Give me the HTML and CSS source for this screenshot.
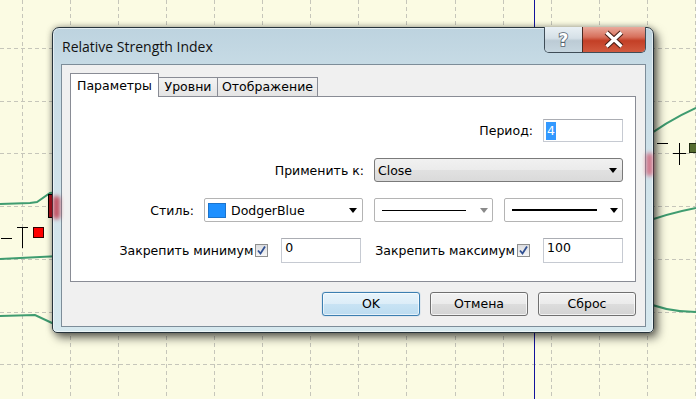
FILE: index.html
```html
<!DOCTYPE html>
<html lang="ru">
<head>
<meta charset="utf-8">
<title>Relative Strength Index</title>
<link rel="stylesheet" href="styles.css">
</head>
<body>
<svg class="chart" width="696" height="399" viewBox="0 0 696 399">
  <g class="grid">
    <path d="M22.5 0V399M70.5 0V399M118.5 0V399M166.5 0V399M214.5 0V399M262.5 0V399M310.5 0V399M358.5 0V399M406.5 0V399M455.5 0V399M503.5 0V399M551.5 0V399M599.5 0V399M647.5 0V399M695.5 0V399"/>
    <path d="M0 48.5H696M0 101.5H696M0 153.5H696M0 206.5H696M0 259.5H696M0 312.5H696M0 364.5H696"/>
  </g>
  <path class="vline" d="M534.5 0V399"/>
  <g class="curves">
    <path d="M0 204L30 203L37 202L50 193L60 192"/>
    <path d="M0 259L60 256"/>
    <path d="M0 316L35 315L52 323L60 326"/>
    <path d="M640 142Q665 122 696 108"/>
    <path d="M640 224Q665 214 696 208"/>
    <path d="M640 300Q665 312 696 312"/>
  </g>
  <g class="marks">
    <path d="M1 238.5H12M17 227.5H28M22.5 227V248M657 143.5H668M679.5 143V165M673 153.5H686"/>
  </g>
  <rect class="redbar" x="48.5" y="194.5" width="6" height="23"/>
  <rect class="redsq" x="33.5" y="227.5" width="10" height="10"/>
  <rect class="olivesq" x="689.5" y="143.5" width="9" height="9"/>
</svg>

<div class="dlg">
  <div class="spot spot-l"></div>
  <div class="spot spot-r"></div>
  <div class="titlebar">
    <span class="title">Relative Strength Index</span>
    <div class="caps">
      <div class="help">
        <svg width="37" height="25" viewBox="0 0 37 25"><text x="18.5" y="19" text-anchor="middle">?</text></svg>
      </div>
      <div class="close">
        <svg width="62" height="25" viewBox="0 0 62 25">
          <path class="xo" d="M23.5 5.5L38.5 19.5M38.5 5.5L23.5 19.5"/>
          <path class="xi" d="M23.5 5.5L38.5 19.5M38.5 5.5L23.5 19.5"/>
        </svg>
      </div>
    </div>
  </div>
  <div class="client">
    <div class="tabs">
      <div class="tab active t1">Параметры</div>
      <div class="tab t2">Уровни</div>
      <div class="tab t3">Отображение</div>
    </div>
    <div class="panel">
      <div class="row">
        <span class="lbl">Период:</span>
        <div class="input period"><span class="sel">4</span></div>
      </div>
      <div class="row">
        <span class="lbl">Применить к:</span>
        <div class="combo grey apply"><span class="ctext">Close</span><span class="arrow"></span></div>
      </div>
      <div class="row">
        <span class="lbl">Стиль:</span>
        <div class="combo white color"><span class="swatch"></span><span class="ctext">DodgerBlue</span><span class="arrow"></span></div>
        <div class="combo white small"><span class="line thin"></span><span class="arrow dim"></span></div>
        <div class="combo white small"><span class="line thick"></span><span class="arrow"></span></div>
      </div>
      <div class="row">
        <span class="lbl2">Закрепить минимум</span>
        <span class="cb"><svg width="11" height="11" viewBox="0 0 11 11"><path d="M2 5.5L4.5 8.5L9 1.5"/></svg></span>
        <div class="input lim">0</div>
        <span class="lbl2 gap">Закрепить максимум</span>
        <span class="cb"><svg width="11" height="11" viewBox="0 0 11 11"><path d="M2 5.5L4.5 8.5L9 1.5"/></svg></span>
        <div class="input lim">100</div>
      </div>
    </div>
    <div class="buttons">
      <div class="btn ok">OK</div>
      <div class="btn">Отмена</div>
      <div class="btn">Сброс</div>
    </div>
  </div>
</div>
</body>
</html>
```

FILE: styles.css
```css
* { box-sizing: border-box; margin: 0; padding: 0; }
html, body { width: 696px; height: 399px; overflow: hidden; }
body {
  position: relative;
  background: #fbfbe3;
  font-family: "DejaVu Sans", Verdana, sans-serif;
  font-size: 12.5px;
  color: #000;
}

/* chart canvas */
.chart { position: absolute; left: 0; top: 0; display: block; }
.grid path { stroke: #c6c6ba; stroke-width: 1; stroke-dasharray: 4 3; fill: none; }
.vline { stroke: #12129c; stroke-width: 1; }
.curves path { fill: none; stroke: #3f9c70; stroke-width: 2; }
.marks path { stroke: #000; stroke-width: 1; fill: none; }
.redbar { fill: #b3121e; stroke: #000; }
.redsq { fill: #ff0000; stroke: #300; }
.olivesq { fill: #556b2f; stroke: #1f2a10; }

/* dialog window */
.dlg {
  position: absolute;
  left: 52px;
  top: 27px;
  width: 602px;
  height: 306px;
  display: flex;
  flex-direction: column;
  padding: 0 7px 5px 8px;
  border: 1px solid #26333b;
  border-radius: 7px 7px 5px 5px;
  background: linear-gradient(180deg, #bdd3df 0, #c8dce6 14%, #d2e4eb 60%, #d6e8ee 100%);
  box-shadow: inset 0 0 0 1px rgba(255,255,255,.55), 4px 5px 10px rgba(0,0,0,.55), 0 0 6px rgba(0,0,0,.35);
}
.spot { position: absolute; filter: blur(2px); border-radius: 3px; }
.spot-l { left: 0; top: 168px; width: 7px; height: 23px; background: rgba(190, 30, 50, .75); }
.spot-r { left: 593px; top: 125px; width: 7px; height: 23px; background: rgba(210, 70, 95, .7); }

.titlebar { height: 36px; display: flex; align-items: flex-start; }
.title {
  font-family: "Open Sans", "Noto Sans", sans-serif;
  font-size: 14px;
  line-height: 20px;
  padding: 9px 0 0 1px;
  color: #111;
}
.caps {
  margin-left: auto;
  margin-top: -1px;
  display: flex;
  height: 26px;
  border: 1px solid #3f4d57;
  border-top: none;
  border-radius: 0 0 5px 5px;
  overflow: hidden;
}
.help {
  width: 37px;
  background: linear-gradient(180deg, #e9f0f4 0, #d5e0e7 45%, #bccbd5 55%, #c6d6df 100%);
}
.help svg, .close svg { display: block; }
.help text {
  font-family: "DejaVu Sans", sans-serif;
  font-weight: bold;
  font-size: 17px;
  fill: #fff;
  stroke: #55636e;
  stroke-width: 1.6px;
  paint-order: stroke fill;
}
.close {
  width: 63px;
  border-left: 1px solid #4b2a22;
  background: linear-gradient(180deg, #e9aa9c 0, #d7705c 40%, #c33f26 55%, #d15a3f 100%);
}
.xo { stroke: #4a2018; stroke-width: 5.4; fill: none; }
.xi { stroke: #fff; stroke-width: 3.2; fill: none; }

/* client area */
.client {
  flex: 1;
  background: #f0f0f0;
  border: 1px solid #7d8d99;
  padding: 8px 9px 10px 8px;
  display: flex;
  flex-direction: column;
}
.tabs { height: 23px; display: flex; align-items: flex-end; position: relative; z-index: 1; }
.tab {
  height: 19px;
  border: 1px solid #898c95;
  border-bottom: none;
  background: linear-gradient(180deg, #f3f3f3, #e4e4e4);
  line-height: 18px;
  text-align: center;
  margin-left: -1px;
}
.tab.active {
  height: 24px;
  margin-bottom: -1px;
  background: #fff;
  padding-top: 3px;
  position: relative;
  z-index: 2;
}
.t1 { width: 89px; margin-left: 0; }
.t2 { width: 60px; }
.t3 { width: 101px; }

.panel {
  height: 186px;
  border: 1px solid #898c95;
  background: #fff;
  padding: 21px 12px 0 0;
  display: flex;
  flex-direction: column;
  gap: 16px;
}
.row { display: flex; justify-content: flex-end; align-items: center; height: 24px; }
.lbl { margin-right: 10px; }

.input {
  height: 24px;
  border: 1px solid #c6cad2;
  border-top-color: #abadb3;
  background: #fff;
}
.period { width: 80px; height: 23px; padding: 1px 2px; line-height: 19px; }
.sel { display: inline-block; background: #3399ff; color: #fff; padding: 0 1px; line-height: 18px; }
.lim { width: 80px; height: 25px; padding: 1px 3px; line-height: 16px; }

.combo { height: 24px; display: flex; align-items: center; position: relative; }
.grey {
  border: 1px solid #7a7a7a;
  border-radius: 3px;
  background: linear-gradient(180deg, #f1f1f1 0, #ebebeb 50%, #e1e1e1 51%, #dadada 100%);
}
.apply { width: 249px; padding: 0 5px 0 3px; }
.white { border: 1px solid #b4b4b4; border-radius: 2px; background: #fff; }
.color { width: 159px; padding: 0 5px 0 3px; }
.small { width: 119px; margin-left: 11px; padding: 0 4px 0 7px; }
.ctext { flex: 1; }
.arrow {
  width: 0; height: 0;
  border-left: 4px solid transparent;
  border-right: 4px solid transparent;
  border-top: 5px solid #000;
}
.apply .arrow { border-left-width: 4.5px; border-right-width: 4.5px; }
.arrow.dim { border-top-color: #8a8a8a; }
.swatch {
  width: 18px; height: 15px;
  background: #1e90ff;
  border: 1px solid #1c74cc;
  margin-right: 5px;
}
.line { flex: 1; margin-right: 14px; background: #000; }
.thin { height: 1px; }
.thick { height: 2px; margin-right: 13px; }

.lbl2 { margin-right: 2px; }
.lbl2.gap { margin-left: 14px; }
.cb {
  width: 13px; height: 13px;
  border: 1px solid #8e8f8f;
  background: linear-gradient(180deg, #dcdde0, #f6f6f6);
  margin-right: 13px;
  display: flex; align-items: center; justify-content: center;
}
.cb svg { display: block; }
.cb path { fill: none; stroke: #2f4f92; stroke-width: 1.8; }

.buttons { margin-top: 10px; display: flex; justify-content: flex-end; gap: 10px; }
.btn {
  width: 98px; height: 24px;
  border: 1px solid #707070;
  border-radius: 3px;
  background: linear-gradient(180deg, #f2f2f2 0, #ebebeb 49%, #dddddd 50%, #d3d3d3 100%);
  box-shadow: inset 0 0 0 1px rgba(255,255,255,.7);
  text-align: center;
  line-height: 22px;
}
.btn.ok {
  border-color: #3c7fb1;
  background: linear-gradient(180deg, #e8f4fb 0, #dcedf8 49%, #c8e3f4 50%, #bcdcf0 100%);
  box-shadow: inset 0 0 0 1px rgba(255,255,255,.6), 0 0 1px #4c9ad0;
}
```
